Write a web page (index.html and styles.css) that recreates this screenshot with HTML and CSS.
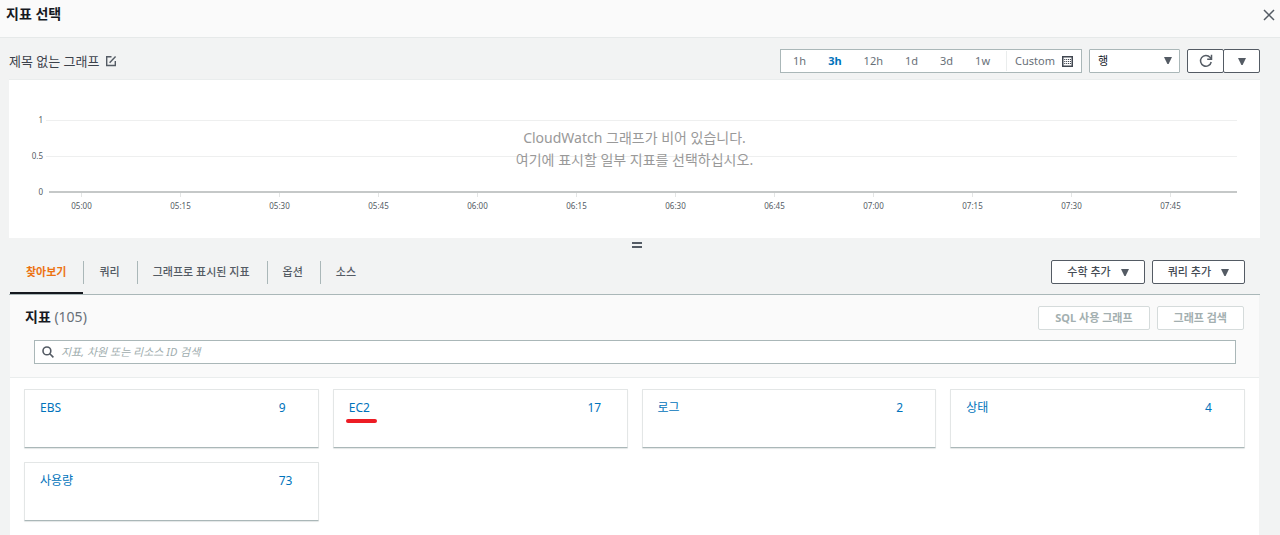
FILE: index.html
```html
<!DOCTYPE html>
<html lang="ko">
<head>
<meta charset="utf-8">
<title>지표 선택</title>
<link rel="stylesheet" href="styles.css">
</head>
<body>
<header class="header">
  <h1 class="header-title">지표 선택</h1>
  <button class="icon-button" aria-label="닫기"><svg width="12" height="12" viewBox="0 0 12 12" fill="none" stroke="currentColor" stroke-width="1.5"><path d="M1 1l10 10M11 1L1 11"/></svg></button>
</header>
<main class="main">
  <div class="toolbar">
    <div class="graph-name">
      <span>제목 없는 그래프</span>
      <button class="icon-button" aria-label="이름 편집"><svg width="12" height="12" viewBox="0 0 12 12" fill="none" stroke="currentColor" stroke-width="1.4"><path d="M6.5 1.7H1.7v8.8h8.6V6"/><path d="M4.6 7.8L10.6 1.4"/></svg></button>
    </div>
    <div class="controls">
      <div class="ranges">
        <button class="range">1h</button>
        <button class="range range-active">3h</button>
        <button class="range">12h</button>
        <button class="range">1d</button>
        <button class="range">3d</button>
        <button class="range">1w</button>
        <button class="range range-custom">Custom <svg width="11" height="11" viewBox="0 0 11 11"><path d="M.75 .75h9.5v9.5H.75z" fill="none" stroke="currentColor" stroke-width="1.5"/><path d="M2.2 3.5h7M2.2 5.5h7M2.2 7.5h7" stroke="currentColor" stroke-width="1.2" stroke-dasharray="1.1 .8"/></svg></button>
      </div>
      <div class="select-wrap">
        <select class="select" aria-label="그래프 유형"><option>행</option></select>
        <svg class="select-caret" width="8" height="7" viewBox="0 0 8 7"><path d="M0 0h8L4.6 7H3.4z" fill="currentColor"/></svg>
      </div>
      <div class="refresh-group">
        <button class="button refresh" aria-label="새로 고침"><svg width="14" height="14" viewBox="0 0 14 14" fill="none" stroke="currentColor" stroke-width="1.5"><path d="M12.2 8A5.4 5.4 0 1 1 11 3.3L12.4 5"/><path d="M12.5 .8v4.4H8.2"/></svg></button>
        <button class="button refresh" aria-label="새로 고침 옵션"><svg width="8" height="7" viewBox="0 0 8 7"><path d="M0 0h8L4.6 7H3.4z" fill="currentColor"/></svg></button>
      </div>
    </div>
  </div>

  <section class="chart">
    <div class="chart-row"><span>1</span><i class="line"></i></div>
    <div class="chart-row"><span>0.5</span><i class="line"></i></div>
    <div class="chart-row"><span>0</span><i class="line line-axis"></i></div>
    <div class="ticks">
      <span>05:00</span><span>05:15</span><span>05:30</span><span>05:45</span><span>06:00</span><span>06:15</span><span>06:30</span><span>06:45</span><span>07:00</span><span>07:15</span><span>07:30</span><span>07:45</span>
    </div>
    <p class="chart-empty">CloudWatch 그래프가 비어 있습니다.<br>여기에 표시할 일부 지표를 선택하십시오.</p>
  </section>
  <div class="handle"></div>

  <div class="tabbar">
    <nav class="tabs">
      <button class="tab tab-active">찾아보기</button>
      <button class="tab">쿼리</button>
      <button class="tab">그래프로 표시된 지표</button>
      <button class="tab">옵션</button>
      <button class="tab">소스</button>
    </nav>
    <div class="actions">
      <button class="button">수학 추가 <svg width="8" height="7" viewBox="0 0 8 7"><path d="M0 0h8L4.6 7H3.4z" fill="currentColor"/></svg></button>
      <button class="button">쿼리 추가 <svg width="8" height="7" viewBox="0 0 8 7"><path d="M0 0h8L4.6 7H3.4z" fill="currentColor"/></svg></button>
    </div>
  </div>

  <section class="panel">
    <div class="panel-head">
      <div class="panel-top">
        <h2 class="panel-title">지표 <span class="count">(105)</span></h2>
        <div class="actions">
          <button class="button" disabled>SQL 사용 그래프</button>
          <button class="button" disabled>그래프 검색</button>
        </div>
      </div>
      <label class="search">
        <svg width="12" height="12" viewBox="0 0 12 12" fill="none" stroke="currentColor" stroke-width="1.6"><circle cx="4.9" cy="4.9" r="3.9"/><path d="M7.8 7.8l3.6 3.6"/></svg>
        <input class="search-input" type="text" aria-label="지표 검색" placeholder="지표, 차원 또는 리소스 ID 검색">
      </label>
    </div>
    <div class="cards">
      <a class="card" href="#"><span>EBS</span><span class="card-count">9</span></a>
      <a class="card" href="#"><span class="marked">EC2</span><span class="card-count">17</span></a>
      <a class="card" href="#"><span>로그</span><span class="card-count">2</span></a>
      <a class="card" href="#"><span>상태</span><span class="card-count">4</span></a>
      <a class="card" href="#"><span>사용량</span><span class="card-count">73</span></a>
    </div>
  </section>
</main>
</body>
</html>
```

FILE: styles.css
```css
* { box-sizing: border-box; }
body {
  margin: 0;
  min-height: 100vh;
  display: flex;
  flex-direction: column;
  background: #f2f3f3;
  color: #16191f;
  font-family: "Noto Sans", "Noto Sans CJK KR", sans-serif;
  font-size: 12px;
  line-height: 18px;
}
button, input, select { font: inherit; color: inherit; }
button { cursor: pointer; }
svg { display: block; flex: none; }

.header {
  display: flex;
  justify-content: space-between;
  align-items: flex-start;
  height: 38px;
  padding: 5px 5px 0 6px;
  background: #fafafa;
  border-bottom: 1px solid #e6e9e9;
}
.header-title { margin: 0; font-size: 14px; font-weight: 700; }
.icon-button {
  display: flex;
  align-items: center;
  height: 20px;
  padding: 0;
  border: 0;
  background: none;
  color: #545b64;
}

.main {
  flex: 1;
  display: flex;
  flex-direction: column;
  padding: 11px 20px 0 9px;
}
.toolbar { display: flex; justify-content: space-between; margin-bottom: 6px; }
.graph-name { display: flex; align-items: center; gap: 6px; font-size: 13px; color: #3c424b; }
.controls { display: flex; gap: 7px; }
.ranges {
  display: flex;
  height: 24px;
  padding: 1px 0 1px 1px;
  background: #fff;
  border: 1px solid #aab7b8;
  font-size: 11px;
  color: #687078;
}
.range { padding: 0 11px; border: 0; background: none; }
.range-active { color: #0073bb; font-weight: 700; }
.range-custom {
  display: flex;
  align-items: center;
  gap: 7px;
  margin-left: 5px;
  padding: 0 8px;
  border-left: 1px solid #eaeded;
}
.range-custom svg { color: #414750; }
.select-wrap { position: relative; }
.select {
  width: 91px;
  height: 24px;
  padding: 0 8px;
  appearance: none;
  background: #fff;
  border: 1px solid #aab7b8;
  border-radius: 1px;
  font-size: 11px;
}
.select-caret {
  position: absolute;
  top: 8px;
  right: 8px;
  color: #545b64;
  pointer-events: none;
}
.refresh-group { display: flex; }

.button {
  display: flex;
  align-items: center;
  gap: 10px;
  height: 24px;
  padding: 0 15px;
  border: 1px solid #545b64;
  border-radius: 2px;
  background: #fff;
  color: #444b54;
  font-size: 11px;
  font-weight: 500;
}
.button svg { color: #545b64; }
.button:disabled { padding: 0 16px; border-color: #d5dbdb; color: #a3afb0; font-weight: 700; }
.refresh { justify-content: center; width: 37px; padding: 0; }
.refresh + .refresh { margin-left: -1px; }

.chart {
  position: relative;
  height: 159px;
  padding: 22px 23px 0 22px;
  background: #fff;
  border-top: 1px solid #eaeded;
  font-size: 8px;
  color: #545b64;
}
.chart-row { display: flex; align-items: center; gap: 3px; height: 36px; }
.chart-row span { width: 12px; text-align: right; }
.line { flex: 1; height: 1px; background: #eeefef; }
.line-axis { height: 2px; margin-left: 3px; background: #c5c8c8; }
.ticks {
  display: grid;
  grid-template-columns: repeat(12, 1fr);
  margin: -17px 17px 0 1px;
  text-align: center;
}
.ticks span::before {
  content: "";
  display: block;
  width: 1px;
  height: 4px;
  margin: 0 auto;
  background: #e3e5e5;
}
.chart-empty {
  position: absolute;
  top: 47px;
  left: 0;
  right: 0;
  margin: 0;
  text-align: center;
  font-size: 14px;
  line-height: 22px;
  color: #999;
}
.handle {
  align-self: center;
  width: 10px;
  height: 6px;
  margin: 4px 0 12px 4px;
  border: solid #545b64;
  border-width: 2px 0;
}

.tabbar {
  display: flex;
  justify-content: space-between;
  height: 35px;
  border-bottom: 1px solid #aab7b8;
}
.tabs { display: flex; margin-left: 1px; }
.tab {
  position: relative;
  padding: 0 17px 11px 16px;
  border: 0;
  background: none;
  color: #545b64;
  font-size: 11px;
  font-weight: 500;
}
.tab + .tab::before {
  content: "";
  position: absolute;
  top: 1px;
  left: 0;
  width: 1px;
  height: 23px;
  background: #aab7b8;
}
.tab-active { color: #ec7211; font-weight: 700; border-bottom: 2px solid #16191f; padding-bottom: 9px; }
.actions { display: flex; gap: 7px; }
.tabbar .actions { padding-right: 15px; }

.panel { flex: 1; margin: 0 1px; background: #fff; }
.panel-head {
  padding: 11px 15px 13px;
  background: #fafafa;
  border-bottom: 1px solid #eaeded;
}
.panel-top { display: flex; justify-content: space-between; }
.panel-title { margin: 0; font-size: 14px; line-height: 22px; font-weight: 700; }
.count { font-weight: 400; color: #687078; }
.search {
  display: flex;
  align-items: center;
  gap: 7px;
  height: 24px;
  margin: 10px 8px 0 9px;
  padding: 0 7px;
  background: #fff;
  border: 1px solid #aab7b8;
  color: #545b64;
}
.search-input { flex: 1; min-width: 0; padding: 0; border: 0; outline: 0; background: none; font-size: 11px; }
.search-input::placeholder { color: #a0adae; font-style: italic; opacity: 1; }

.cards {
  display: grid;
  grid-template-columns: repeat(4, 1fr);
  gap: 14px;
  padding: 11px 14px;
}
.card {
  display: flex;
  justify-content: space-between;
  align-items: flex-start;
  height: 59px;
  padding: 9px 15px;
  border: 1px solid #e3e6e6;
  border-bottom-color: #aab7b8;
  border-radius: 1px;
  box-shadow: 0 1px 1px #e3e6e6;
  color: #0073bb;
  text-decoration: none;
}
.card-count { width: 24px; }
.marked { position: relative; }
.marked::after {
  content: "";
  position: absolute;
  left: -3px;
  right: -7px;
  bottom: -6px;
  height: 4px;
  border-radius: 2px;
  background: #ed1c24;
}
```
